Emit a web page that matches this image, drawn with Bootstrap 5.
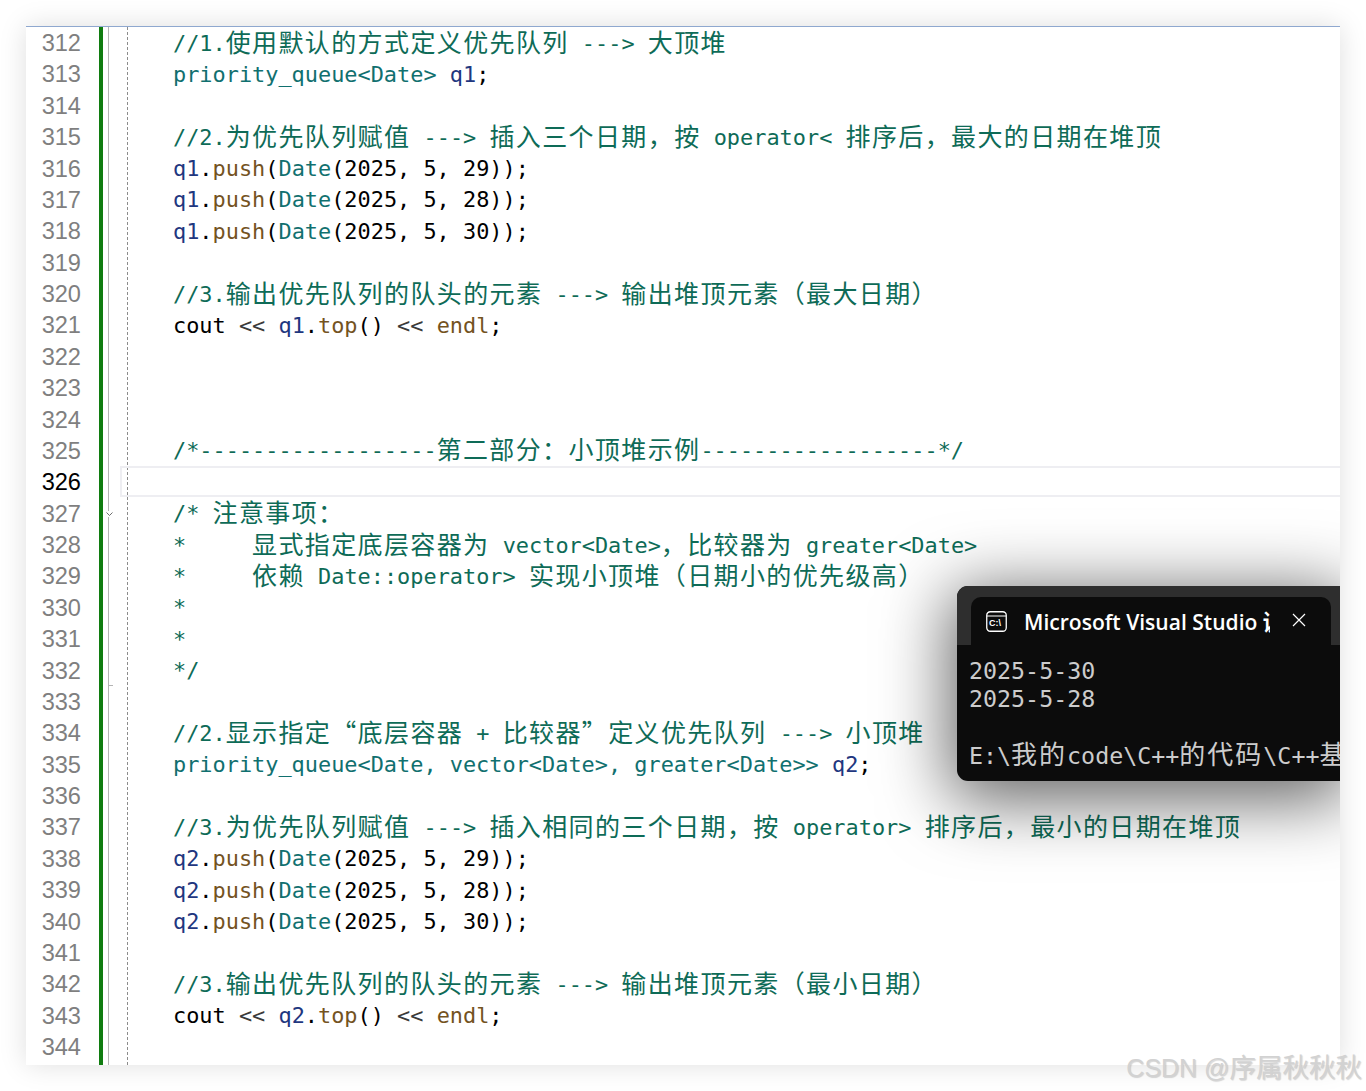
<!doctype html>
<html lang="zh"><head><meta charset="utf-8"><title>Visual Studio</title>
<link rel="stylesheet" href="https://cdn.jsdelivr.net/npm/bootstrap@5.3.0/dist/css/bootstrap.min.css">
<style>
html,body{height:1091px;overflow:hidden;background:#fff}
.stage{padding:26px;height:1091px}
.editor{height:1039px;background:#fff;border-top:1px solid #8fa8cf;box-shadow:0 0 26px rgba(0,0,0,.13);font-family:"DejaVu Sans Mono","Noto Sans CJK SC",monospace;font-size:21.9px}
.nums{width:73px;flex:none;text-align:right;padding:1px 18px 0 0;color:#7f7f7f;font-family:"Liberation Sans",sans-serif;font-size:23.6px}
.nums>div,.cl{height:31.375px;line-height:31.375px}
.cl{white-space:pre}
.nums .now{color:#000}
.greenbar{width:4px;flex:none;background:#107c10}
.foldcol{width:24px;flex:none}
.foldline{left:5px;top:0;bottom:0;width:1px;background:#b4b4b4}
.foldtick{left:5px;top:658px;width:5px;height:1px;background:#b4b4b4}
.chev{left:2px;top:484px;width:9px;height:6px;background:#fff}
.codecol{flex:1;min-width:0;border-left:1px dashed #8c8c8c;padding:.5px 0 0 45px;color:#000}
.z{font-family:"Noto Sans CJK SC",sans-serif;font-size:25px;letter-spacing:1.38px;font-weight:400;line-height:0;vertical-align:-1px}
.cur{margin:-1px 0 1.375px -53px;height:31px;border:2px solid #eeeef2;border-right:0}
.c{color:#0e6b57}.t{color:#11706f}.v{color:#1f377f}.f{color:#74531f}.k{color:#3a3a3a}
.popup{right:0;top:559px;width:383px;height:195px;background:#0c0c0c;border-radius:11px 0 0 11px;box-shadow:0 12px 68px 8px rgba(0,0,0,.6);color:#cccccc;overflow:hidden}
.strip{height:59px;background:#2e2e2e;padding:11px 9px 0 14px}
.tabx{height:48px;width:360px;background:#0c0c0c;border-radius:10px 10px 0 0;padding:14px 0 0 15px;color:#fff}
.ttl{width:246px;margin-left:17px;overflow:hidden;white-space:nowrap;font-family:"Open Sans","Noto Sans CJK SC",sans-serif;font-size:21.05px;line-height:22px;font-weight:600}
.xbtn{margin-left:22px;margin-top:2px}
.con{padding:12px 0 0 12px;font-size:23.3px;line-height:28.3px;white-space:pre}
.con .z{font-size:26px;letter-spacing:2px;line-height:0;vertical-align:0}
.wmark{right:4px;top:1051px;color:#d2d2d2;font-family:"Liberation Sans","Noto Sans CJK SC",sans-serif;font-size:25px;line-height:34px;text-shadow:1px 1px 1px rgba(0,0,0,.16)}
.wz{font-size:26.5px;line-height:0}
</style></head><body>
<div class="stage position-relative">
<div class="editor d-flex position-relative overflow-hidden">
<div class="nums">
<div>312</div><div>313</div><div>314</div><div>315</div><div>316</div><div>317</div><div>318</div><div>319</div><div>320</div><div>321</div><div>322</div><div>323</div><div>324</div><div>325</div><div class="now">326</div><div>327</div><div>328</div><div>329</div><div>330</div><div>331</div><div>332</div><div>333</div><div>334</div><div>335</div><div>336</div><div>337</div><div>338</div><div>339</div><div>340</div><div>341</div><div>342</div><div>343</div><div>344</div>
</div>
<div class="greenbar"></div>
<div class="foldcol position-relative">
<div class="foldline position-absolute"></div><div class="foldtick position-absolute"></div>
<div class="chev position-absolute d-flex"><svg width="9" height="6" viewBox="0 0 9 6"><path d="M1.5 1.5 4.5 4.5 7.5 1.5" fill="none" stroke="#6e6e6e"/></svg></div>
</div>
<div class="codecol">
<div class="cl c">//1.<span class="z">使用默认的方式定义优先队列</span> ---&gt; <span class="z">大顶堆</span></div>
<div class="cl"><span class="t">priority_queue&lt;Date&gt;</span> <span class="v">q1</span>;</div>
<div class="cl"></div>
<div class="cl c">//2.<span class="z">为优先队列赋值</span> ---&gt; <span class="z">插入三个日期，按</span> operator&lt; <span class="z">排序后，最大的日期在堆顶</span></div>
<div class="cl"><span class="v">q1</span>.<span class="f">push</span>(<span class="t">Date</span>(2025, 5, 29));</div>
<div class="cl"><span class="v">q1</span>.<span class="f">push</span>(<span class="t">Date</span>(2025, 5, 28));</div>
<div class="cl"><span class="v">q1</span>.<span class="f">push</span>(<span class="t">Date</span>(2025, 5, 30));</div>
<div class="cl"></div>
<div class="cl c">//3.<span class="z">输出优先队列的队头的元素</span> ---&gt; <span class="z">输出堆顶元素（最大日期）</span></div>
<div class="cl">cout <span class="k">&lt;&lt;</span> <span class="v">q1</span>.<span class="f">top</span>() <span class="k">&lt;&lt;</span> <span class="f">endl</span>;</div>
<div class="cl"></div><div class="cl"></div><div class="cl"></div>
<div class="cl c">/*------------------<span class="z">第二部分：小顶堆示例</span>------------------*/</div>
<div class="cur"></div>
<div class="cl c">/* <span class="z">注意事项：</span></div>
<div class="cl c">*     <span class="z">显式指定底层容器为</span> vector&lt;Date&gt;<span class="z">，比较器为</span> greater&lt;Date&gt;</div>
<div class="cl c">*     <span class="z">依赖</span> Date::operator&gt; <span class="z">实现小顶堆（日期小的优先级高）</span></div>
<div class="cl c">*</div>
<div class="cl c">*</div>
<div class="cl c">*/</div>
<div class="cl"></div>
<div class="cl c">//2.<span class="z">显示指定“底层容器</span> + <span class="z">比较器”定义优先队列</span> ---&gt; <span class="z">小顶堆</span></div>
<div class="cl"><span class="t">priority_queue&lt;Date, vector&lt;Date&gt;, greater&lt;Date&gt;&gt;</span> <span class="v">q2</span>;</div>
<div class="cl"></div>
<div class="cl c">//3.<span class="z">为优先队列赋值</span> ---&gt; <span class="z">插入相同的三个日期，按</span> operator&gt; <span class="z">排序后，最小的日期在堆顶</span></div>
<div class="cl"><span class="v">q2</span>.<span class="f">push</span>(<span class="t">Date</span>(2025, 5, 29));</div>
<div class="cl"><span class="v">q2</span>.<span class="f">push</span>(<span class="t">Date</span>(2025, 5, 28));</div>
<div class="cl"><span class="v">q2</span>.<span class="f">push</span>(<span class="t">Date</span>(2025, 5, 30));</div>
<div class="cl"></div>
<div class="cl c">//3.<span class="z">输出优先队列的队头的元素</span> ---&gt; <span class="z">输出堆顶元素（最小日期）</span></div>
<div class="cl">cout <span class="k">&lt;&lt;</span> <span class="v">q2</span>.<span class="f">top</span>() <span class="k">&lt;&lt;</span> <span class="f">endl</span>;</div>
<div class="cl"></div>
</div>
<div class="popup position-absolute">
<div class="strip"><div class="tabx d-flex align-items-start">
<svg width="21" height="21" viewBox="0 0 21 21"><rect x=".75" y=".75" width="19.5" height="19.5" rx="3.5" fill="none" stroke="#fff" stroke-width="1.3"/><path d="M1 5h19" stroke="#fff" stroke-width="1.2"/><text x="3" y="15" font-family="Liberation Sans" font-size="9" font-weight="700" fill="#fff">C:\</text></svg>
<div class="ttl">Microsoft Visual Studio 调试控制台</div>
<svg class="xbtn" width="14" height="14" viewBox="0 0 14 14"><path d="M1 1 13 13M13 1 1 13" stroke="#fff" stroke-width="1.2"/></svg>
</div></div>
<div class="con">2025-5-30
2025-5-28

E:\<span class="z">我的</span>code\C++<span class="z">的代码</span>\C++<span class="z">基础</span></div>
</div>
</div>
<div class="wmark position-absolute">CSDN @<span class="wz">序属秋秋秋</span></div>
</div>
</body></html>
